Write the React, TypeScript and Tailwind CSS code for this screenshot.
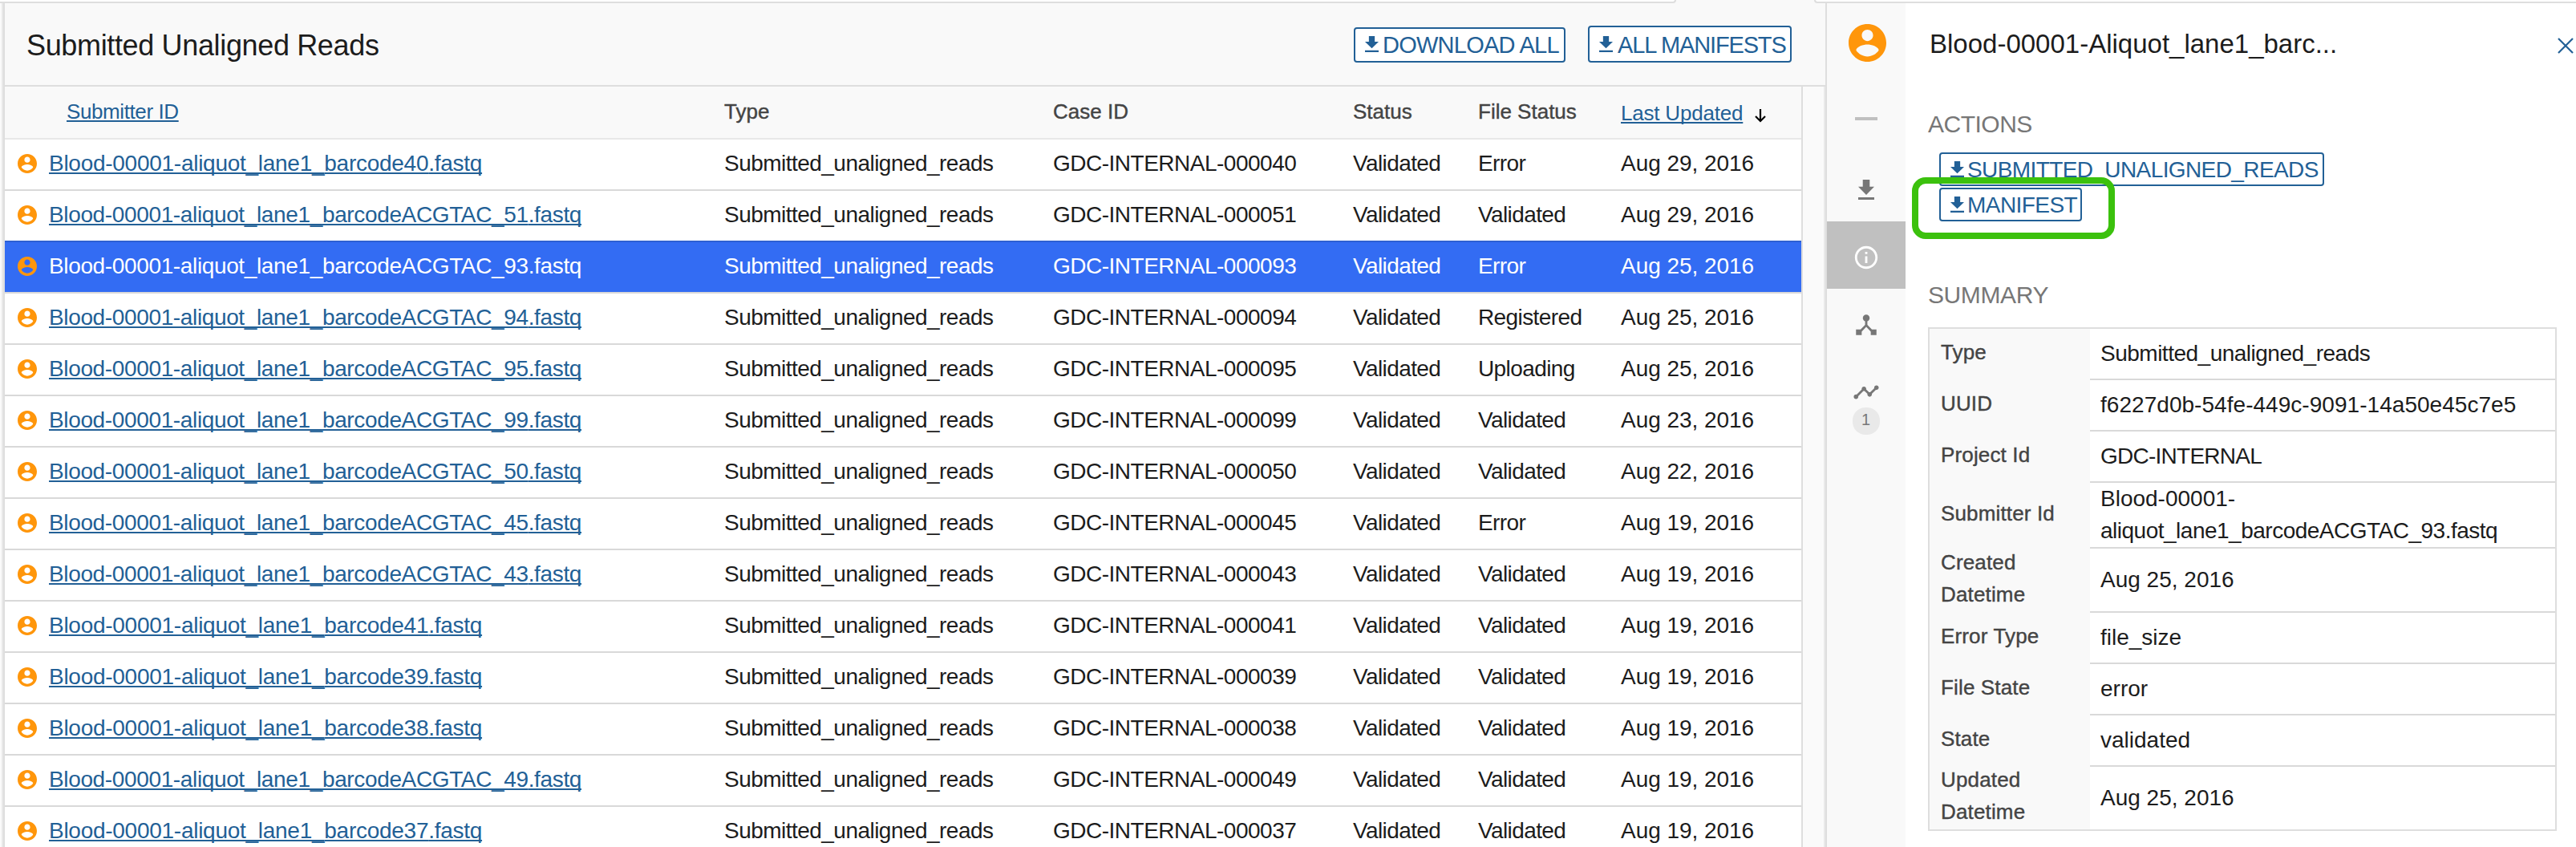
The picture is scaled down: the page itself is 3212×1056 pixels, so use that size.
import React from "react";

type Row = {
  name: string;
  caseId: string;
  fileStatus: string;
  updated: string;
  selected?: boolean;
};

const rows: Row[] = [
  { name: "barcode40", caseId: "000040", fileStatus: "Error", updated: "Aug 29, 2016" },
  { name: "barcodeACGTAC_51", caseId: "000051", fileStatus: "Validated", updated: "Aug 29, 2016" },
  { name: "barcodeACGTAC_93", caseId: "000093", fileStatus: "Error", updated: "Aug 25, 2016", selected: true },
  { name: "barcodeACGTAC_94", caseId: "000094", fileStatus: "Registered", updated: "Aug 25, 2016" },
  { name: "barcodeACGTAC_95", caseId: "000095", fileStatus: "Uploading", updated: "Aug 25, 2016" },
  { name: "barcodeACGTAC_99", caseId: "000099", fileStatus: "Validated", updated: "Aug 23, 2016" },
  { name: "barcodeACGTAC_50", caseId: "000050", fileStatus: "Validated", updated: "Aug 22, 2016" },
  { name: "barcodeACGTAC_45", caseId: "000045", fileStatus: "Error", updated: "Aug 19, 2016" },
  { name: "barcodeACGTAC_43", caseId: "000043", fileStatus: "Validated", updated: "Aug 19, 2016" },
  { name: "barcode41", caseId: "000041", fileStatus: "Validated", updated: "Aug 19, 2016" },
  { name: "barcode39", caseId: "000039", fileStatus: "Validated", updated: "Aug 19, 2016" },
  { name: "barcode38", caseId: "000038", fileStatus: "Validated", updated: "Aug 19, 2016" },
  { name: "barcodeACGTAC_49", caseId: "000049", fileStatus: "Validated", updated: "Aug 19, 2016" },
  { name: "barcode37", caseId: "000037", fileStatus: "Validated", updated: "Aug 19, 2016" },
];

const PersonIcon = ({ className }: { className: string }) => (
  <svg viewBox="2 2 20 20" className={className} fill="currentColor">
    <path d="M12 2C6.48 2 2 6.48 2 12s4.48 10 10 10 10-4.48 10-10S17.52 2 12 2zm0 3c1.66 0 3 1.34 3 3s-1.34 3-3 3-3-1.34-3-3 1.34-3 3-3zm0 14.2c-2.5 0-4.71-1.28-6-3.22.03-1.99 4-3.08 6-3.08 1.99 0 5.97 1.09 6 3.08-1.29 1.94-3.5 3.22-6 3.22z" />
  </svg>
);

const DownloadIcon = ({ className }: { className: string }) => (
  <svg viewBox="5 3 14 17" preserveAspectRatio="none" className={className} fill="currentColor">
    <path d="M19 9h-4V3H9v6H5l7 7 7-7zM5 18v2h14v-2H5z" />
  </svg>
);

const underline =
  "underline decoration-[2px] underline-offset-[2px] [text-decoration-skip-ink:none]";

const gridCols = "grid grid-cols-[897px_410px_374px_156px_178px_1fr]";

const heads = "text-[26px] leading-[40px] text-[#444] [-webkit-text-stroke:0.4px_currentColor]";

function TableRow({ row }: { row: Row }) {
  const long = row.name.includes("_");
  return (
    <div
      className={`${gridCols} h-16 shrink-0 border-t-2 pt-[10px] text-[28px] leading-[40px] whitespace-nowrap ${
        row.selected ? "border-[#2d60d3] bg-[#336cf3] text-white" : "border-[#d9d9d9] bg-white text-[#1c1c1c] first:border-[#e8e8e8]"
      }`}
    >
      <div className="flex">
        <PersonIcon className="mt-2 ml-4 h-6 w-6 text-[#ff960b]" />
        <a
          className={`ml-[15px] ${long ? "tracking-[-0.36px]" : "tracking-[-0.27px]"} ${
            row.selected ? "" : `text-[#226096] ${underline}`
          }`}
        >
          Blood-00001-aliquot_lane1_{row.name}.fastq
        </a>
      </div>
      <div className="tracking-[-0.53px]">Submitted_unaligned_reads</div>
      <div className="tracking-[-0.5px]">GDC-INTERNAL-{row.caseId}</div>
      <div className="tracking-[-0.6px]">Validated</div>
      <div className="tracking-[-0.6px]">{row.fileStatus}</div>
      <div className="tracking-[-0.05px]">{row.updated}</div>
    </div>
  );
}

function DetailRow({
  label,
  value,
  height,
  last,
  tracking,
}: {
  label: React.ReactNode;
  value: React.ReactNode;
  height: string;
  last?: boolean;
  tracking?: string;
}) {
  return (
    <div className={`flex ${height}`}>
      <div className="flex w-[200px] shrink-0 items-center bg-[#f9f9f9] pb-[6px] pl-[14px] text-[26px] leading-[40px] tracking-[0.15px] text-[#444] [-webkit-text-stroke:0.4px_currentColor]">
        <div>{label}</div>
      </div>
      <div
        className={`flex grow items-center pl-[13px] text-[28px] leading-[40px] whitespace-nowrap text-[#1c1c1c] ${
          tracking ?? ""
        } ${last ? "" : "border-b-2 border-[#d9d9d9]"}`}
      >
        <div>{value}</div>
      </div>
    </div>
  );
}

export default function App() {
  return (
    <div className="flex h-[1056px] w-[3212px] flex-col overflow-hidden bg-white font-['Liberation_Sans',Arial,sans-serif]">
      <div className="flex h-1 shrink-0 bg-[#f9f9f9]">
        <div className="h-1 w-[2090px] rounded-br-[4px] border-r-2 border-b-2 border-[#dedede] bg-white" />
        <div className="h-1 w-[172px]" />
        <div className="h-1 grow rounded-bl-[4px] border-b-2 border-l-2 border-[#dedede] bg-white" />
      </div>

      <div className="flex min-h-0 grow">
        <div className="w-[2px] shrink-0 bg-[#fafafa]" />
        <div className="w-[2px] shrink-0 bg-[#e9e9e9]" />
        <div className="w-[2px] shrink-0 bg-[#dedede]" />

        <main className="flex w-[2270px] shrink-0 flex-col bg-[#f9f9f9]">
          <header className="flex h-[104px] shrink-0 border-b-2 border-[#dedede]">
            <h1 className="mt-[28px] ml-[27px] grow text-[36px] leading-[50px] tracking-[-0.35px] text-[#1c1c1c]">
              Submitted Unaligned Reads
            </h1>
            <button className="mt-[30px] mr-7 flex h-[44px] w-[264px] rounded-[4px] border-2 border-[#226096] bg-white pl-3 text-[29px] leading-[40px] tracking-[-0.75px] whitespace-nowrap text-[#226096]">
              <DownloadIcon className="mt-[9px] mr-[5px] h-5 w-[17px] shrink-0" />
              <span>DOWNLOAD ALL</span>
            </button>
            <button className="mt-[28px] mr-[42px] flex h-[46px] w-[254px] rounded-[4px] border-2 border-[#226096] bg-white pl-3 text-[29px] leading-[40px] tracking-[-1.15px] whitespace-nowrap text-[#226096]">
              <DownloadIcon className="mt-[11px] mr-[6px] h-5 w-[17px] shrink-0" />
              <span className="mt-[2px]">ALL MANIFESTS</span>
            </button>
          </header>

          <div className="flex min-h-0 grow">
            <div className="flex w-[2240px] shrink-0 flex-col overflow-hidden">
              <div className={`${gridCols} h-16 shrink-0 pt-[11px] ${heads}`}>
                <div className="pl-[77px]">
                  <a className={`tracking-[-0.4px] text-[#226096] ${underline} [-webkit-text-stroke:0]`}>Submitter ID</a>
                </div>
                <div>Type</div>
                <div>Case ID</div>
                <div>Status</div>
                <div>File Status</div>
                <div className="flex pt-[2px]">
                  <a className={`tracking-[-0.2px] text-[#226096] ${underline} [-webkit-text-stroke:0]`}>Last Updated</a>
                  <svg viewBox="0 0 14 17" className="mt-[15px] ml-[15px] h-[17px] w-[14px]" fill="none" stroke="#000" strokeWidth="2.2">
                    <path d="M7 0v15M1 9l6 6 6-6" />
                  </svg>
                </div>
              </div>
              <div className="flex flex-col">
                {rows.map((row) => (
                  <TableRow key={row.name} row={row} />
                ))}
              </div>
            </div>
            <div className="w-[2px] shrink-0 bg-[#dedede]" />
            <div className="grow bg-[#fafafa]" />
            <div className="w-[2px] shrink-0 bg-[#e9e9e9]" />
          </div>
        </main>

        <nav className="flex w-[100px] shrink-0 flex-col items-center border-l-2 border-[#dedede] bg-[#f9f9f9] text-[#777]">
          <PersonIcon className="mt-[26px] ml-[2px] h-[47px] w-[47px] shrink-0 text-[#ff960b]" />
          <div className="mt-[69px] h-1 w-7 shrink-0 bg-[#c0c0c0]" />
          <DownloadIcon className="mt-[74px] h-[25px] w-5 shrink-0" />
          <div className="mt-[27px] flex h-[84px] w-full shrink-0 items-center justify-center bg-[#c0c0c0] text-white">
            <svg viewBox="0 0 24 24" className="mt-[6px] h-[34px] w-[34px]" fill="currentColor">
              <path d="M11 17h2v-6h-2v6zm1-15C6.48 2 2 6.48 2 12s4.48 10 10 10 10-4.48 10-10S17.52 2 12 2zm0 18c-4.41 0-8-3.59-8-8s3.59-8 8-8 8 3.59 8 8-3.59 8-8 8zM11 9h2V7h-2v2z" />
            </svg>
          </div>
          <svg viewBox="0 0 24 24" className="mt-[28px] h-[34px] w-[34px] shrink-0" fill="currentColor">
            <path d="M17 16l-4-4V8.82C14.16 8.4 15 7.3 15 6c0-1.66-1.34-3-3-3S9 4.34 9 6c0 1.3.84 2.4 2 2.82V12l-4 4H3v5h5v-3.05l4-4.2 4 4.2V21h5v-5h-4z" />
          </svg>
          <svg viewBox="0 0 24 24" className="mt-[50px] h-[34px] w-[34px] shrink-0" fill="currentColor">
            <path d="M23 8c0 1.1-.9 2-2 2-.18 0-.35-.02-.51-.07l-3.56 3.55c.05.16.07.34.07.52 0 1.1-.9 2-2 2s-2-.9-2-2c0-.18.02-.36.07-.52l-2.55-2.55c-.16.05-.34.07-.52.07s-.36-.02-.52-.07l-4.55 4.56c.05.16.07.33.07.51 0 1.1-.9 2-2 2s-2-.9-2-2 .9-2 2-2c.18 0 .35.02.51.07l4.56-4.55C8.02 9.36 8 9.18 8 9c0-1.1.9-2 2-2s2 .9 2 2c0 .18-.02.36-.07.52l2.55 2.55c.16-.05.34-.07.52-.07s.36.02.52.07l3.55-3.56C19.02 8.35 19 8.18 19 8c0-1.1.9-2 2-2s2 .9 2 2z" />
          </svg>
          <div className="mt-[2px] h-[34px] w-[34px] shrink-0 rounded-[16px] bg-[#e9e9e9] pr-px text-center text-[20px] leading-[31px]">
            1
          </div>
        </nav>

        <aside className="flex grow flex-col bg-white pr-6 pl-[28px]">
          <div className="-mr-[21px] flex justify-between">
            <h2 className="mt-[29px] ml-[2px] text-[33px] leading-[44px] text-[#1c1c1c]">
              Blood-00001-Aliquot_lane1_barc...
            </h2>
            <svg viewBox="0 0 20 20" className="mt-[43px] h-5 w-5" fill="none" stroke="#226096" strokeWidth="2.2">
              <path d="M1 1l18 18M19 1L1 19" />
            </svg>
          </div>

          <h3 className="mt-[58px] h-10 text-[30px] leading-[40px] tracking-[-0.5px] text-[#777]">ACTIONS</h3>
          <div className="relative mt-[15px] ml-[14px] flex flex-col items-start gap-[2px]">
            <button className="flex h-[42px] w-[480px] rounded-[4px] border-2 border-[#226096] bg-white pl-3 text-[28px] leading-[40px] tracking-[-0.6px] whitespace-nowrap text-[#226096]">
              <DownloadIcon className="mt-[9px] mr-1 h-5 w-[17px] shrink-0" />
              <span>SUBMITTED_UNALIGNED_READS</span>
            </button>
            <button className="flex h-[42px] w-[178px] rounded-[4px] border-2 border-[#226096] bg-white pl-3 text-[28px] leading-[40px] tracking-[-0.55px] whitespace-nowrap text-[#226096]">
              <DownloadIcon className="mt-[9px] mr-1 h-5 w-[17px] shrink-0" />
              <span>MANIFEST</span>
            </button>
            <div className="absolute top-[31px] -left-[34px] h-[77px] w-[253px] rounded-[17px] border-8 border-[#3bc10d]" />
          </div>

          <h3 className="mt-[72px] h-10 text-[30px] leading-[40px] tracking-[-0.4px] text-[#777]">SUMMARY</h3>
          <div className="mt-5 flex flex-col border-2 border-[#dedede]">
            <DetailRow label="Type" value="Submitted_unaligned_reads" height="h-16" tracking="tracking-[-0.5px]" />
            <DetailRow label="UUID" value="f6227d0b-54fe-449c-9091-14a50e45c7e5" height="h-16" tracking="tracking-[0.04px]" />
            <DetailRow label="Project Id" value="GDC-INTERNAL" height="h-16" tracking="tracking-[-0.75px]" />
            <DetailRow
              label="Submitter Id"
              value={
                <>
                  Blood-00001-
                  <br />
                  <span className="tracking-[-0.5px]">aliquot_lane1_barcodeACGTAC_93.fastq</span>
                </>
              }
              height="h-[82px]"
            />
            <DetailRow label={<>Created<br />Datetime</>} value="Aug 25, 2016" height="h-20" />
            <DetailRow label="Error Type" value="file_size" height="h-16" />
            <DetailRow label="File State" value="error" height="h-16" />
            <DetailRow label="State" value="validated" height="h-16" />
            <DetailRow label={<>Updated<br />Datetime</>} value="Aug 25, 2016" height="h-[78px]" last />
          </div>
        </aside>
      </div>
    </div>
  );
}
